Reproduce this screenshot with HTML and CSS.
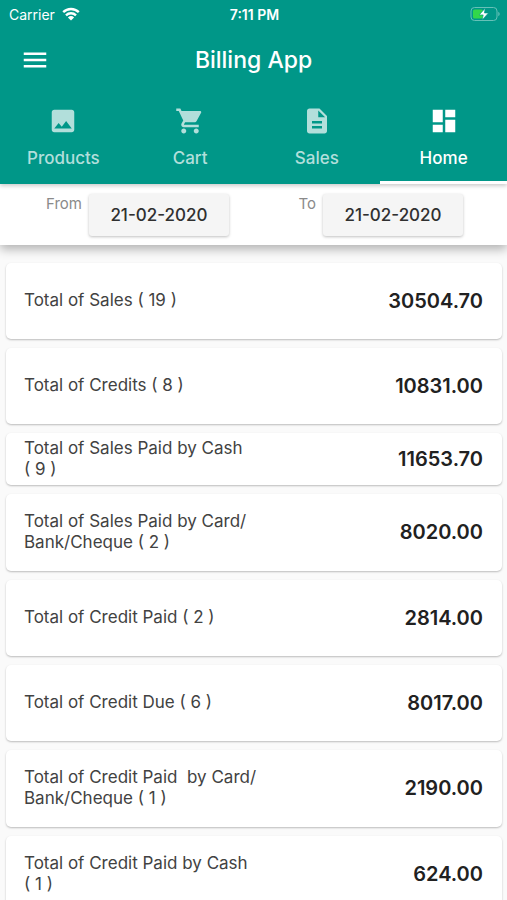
FILE: index.html
```html
<!DOCTYPE html>
<html lang="en">
<head>
<meta charset="utf-8">
<meta name="viewport" content="width=device-width, initial-scale=1">
<title>Billing App</title>
<link rel="stylesheet" href="styles.css">
</head>
<body>
<header class="header">
  <div class="status">
    <div class="carrier">
      <span>Carrier</span>
      <svg class="wifi" viewBox="0 0 18 14" aria-hidden="true">
        <path d="M1.2 5.2a11.2 11.2 0 0 1 15.6 0" />
        <path d="M4 8.3a7.2 7.2 0 0 1 10 0" />
        <path class="solid" d="M9 13.6 5.9 10.4a4.5 4.5 0 0 1 6.2 0z" />
      </svg>
    </div>
    <span class="clock">7:11 PM</span>
    <svg class="battery" viewBox="0 0 30 16" aria-hidden="true">
      <rect class="shell" x="1" y="1.5" width="26" height="13" rx="3.5" />
      <path class="cap" d="M28.3 5.8v4.4q1.4-.7 1.4-2.2t-1.4-2.2z" />
      <rect class="charge" x="3" y="3.5" width="10" height="9" rx="1.5" />
      <path class="bolt" d="M15.2 2.2 9.2 8.900h4l-1 5.100 6.200-7h-4z" />
    </svg>
  </div>
  <div class="appbar">
    <button class="menu" type="button" aria-label="Menu">
      <svg class="icon" viewBox="0 0 24 24" aria-hidden="true"><path d="M3 18h18v-2H3v2zm0-5h18v-2H3v2zm0-7v2h18V6H3z"/></svg>
    </button>
    <h1 class="title">Billing App</h1>
  </div>
  <nav class="tabs">
    <a class="tab" href="#products">
      <svg class="icon" viewBox="0 0 24 24" aria-hidden="true"><path d="M21 19V5c0-1.100-.9-2-2-2H5c-1.100 0-2 .9-2 2v14c0 1.100.9 2 2 2h14c1.100 0 2-.9 2-2zM8.500 13.500l2.500 3.010L14.500 12l4.500 6H5l3.500-4.500z"/></svg>
      <span>Products</span>
    </a>
    <a class="tab" href="#cart">
      <svg class="icon" viewBox="0 0 24 24" aria-hidden="true"><path d="M7 18c-1.100 0-1.990.9-1.990 2S5.900 22 7 22s2-.9 2-2-.9-2-2-2zM1 2v2h2l3.600 7.590-1.350 2.450c-.16.28-.25.61-.25.96 0 1.100.9 2 2 2h12v-2H7.420c-.14 0-.25-.11-.25-.25l.03-.12.900-1.630h7.450c.75 0 1.410-.41 1.750-1.030l3.580-6.490c.08-.14.12-.31.12-.48 0-.55-.45-1-1-1H5.210l-.94-2H1zm16 16c-1.100 0-1.990.9-1.990 2s.89 2 1.990 2 2-.9 2-2-.9-2-2-2z"/></svg>
      <span>Cart</span>
    </a>
    <a class="tab" href="#sales">
      <svg class="icon" viewBox="0 0 24 24" aria-hidden="true"><path d="M14 2H6c-1.100 0-1.990.9-1.990 2L4 20c0 1.100.89 2 1.990 2H18c1.100 0 2-.9 2-2V8l-6-6zm2 16H8v-2h8v2zm0-4H8v-2h8v2zm-3-5V3.500L18.500 9H13z"/></svg>
      <span>Sales</span>
    </a>
    <a class="tab active" href="#home" aria-current="page">
      <svg class="icon" viewBox="0 0 24 24" aria-hidden="true"><path d="M3 13h8V3H3v10zm0 8h8v-6H3v6zm10 0h8V11h-8v10zm0-18v6h8V3h-8z"/></svg>
      <span>Home</span>
    </a>
  </nav>
</header>
<section class="range">
  <div class="field">
    <label for="from">From</label>
    <button class="date" id="from" type="button">21-02-2020</button>
  </div>
  <div class="field">
    <label for="to">To</label>
    <button class="date" id="to" type="button">21-02-2020</button>
  </div>
</section>
<main class="list">
  <article class="card"><span class="label">Total of Sales ( 19 )</span><strong class="amount">30504.70</strong></article>
  <article class="card"><span class="label">Total of Credits ( 8 )</span><strong class="amount">10831.00</strong></article>
  <article class="card dense"><span class="label">Total of Sales Paid by Cash<br>( 9 )</span><strong class="amount">11653.70</strong></article>
  <article class="card"><span class="label">Total of Sales Paid by Card/<br>Bank/Cheque ( 2 )</span><strong class="amount">8020.00</strong></article>
  <article class="card"><span class="label">Total of Credit Paid ( 2 )</span><strong class="amount">2814.00</strong></article>
  <article class="card"><span class="label">Total of Credit Due ( 6 )</span><strong class="amount">8017.00</strong></article>
  <article class="card"><span class="label">Total of Credit Paid&nbsp; by Card/<br>Bank/Cheque ( 1 )</span><strong class="amount">2190.00</strong></article>
  <article class="card"><span class="label">Total of Credit Paid by Cash<br>( 1 )</span><strong class="amount">624.00</strong></article>
</main>
</body>
</html>
```
FILE: styles.css
```css
* {
  box-sizing: border-box;
}

html {
  scrollbar-width: none;
}

body {
  margin: 0;
  background: #fafafa;
  color: #424242;
  font-family: Inter, Roboto, sans-serif;
  font-size: 17px;
}

button {
  border: 0;
  font: inherit;
}

.header {
  position: relative;
  z-index: 2;
  background: #009788;
  color: #fff;
  box-shadow: 0 2px 4px rgba(0, 0, 0, 0.2);
}

.status {
  display: grid;
  grid-template-columns: 1fr auto 1fr;
  align-items: center;
  height: 28px;
  padding: 0 7px 0 9px;
  font-size: 14px;
}

.carrier {
  display: flex;
  align-items: center;
  gap: 7px;
}

.wifi {
  width: 18px;
  height: 14px;
  fill: none;
  stroke: #fff;
  stroke-width: 2.4;
}

.wifi .solid {
  fill: #fff;
  stroke: none;
}

.clock {
  font-weight: 600;
}

.battery {
  justify-self: end;
  width: 30px;
  height: 16px;
}

.battery .shell {
  fill: none;
  stroke: #66c1b8;
}

.battery .cap {
  fill: #66c1b8;
}

.battery .charge {
  fill: #32d74b;
}

.battery .bolt {
  fill: #fff;
  stroke: #009788;
  stroke-width: 0.6;
}

.appbar {
  display: grid;
  grid-template-columns: 1fr auto 1fr;
  align-items: center;
  height: 64px;
  padding: 0 20px;
}

.menu {
  justify-self: start;
  padding: 0;
  background: none;
  color: inherit;
}

.icon {
  display: block;
  width: 30px;
  height: 30px;
  fill: currentColor;
}

.title {
  margin: 0;
  font-size: 23px;
  font-weight: 500;
}

.tabs {
  display: grid;
  grid-template-columns: repeat(4, 1fr);
}

.tab {
  display: flex;
  flex-direction: column;
  align-items: center;
  gap: 12px;
  height: 92px;
  padding-top: 14px;
  border-bottom: 3px solid transparent;
  color: #b2dfdb;
  font-weight: 500;
  line-height: 20px;
  text-decoration: none;
}

.tab.active {
  border-color: #fff;
  color: #fff;
}

.range {
  position: relative;
  z-index: 1;
  display: flex;
  justify-content: space-between;
  padding: 10px 44px 9px 46px;
  background: #fff;
  box-shadow: 0 4px 10px rgba(0, 0, 0, 0.3);
}

.field {
  display: flex;
  gap: 7px;
  color: #8a8a8a;
  font-size: 15px;
  line-height: 19px;
}

.date {
  width: 140px;
  height: 42px;
  padding: 0;
  border-radius: 3px;
  background: #f5f5f5;
  color: #303030;
  font-size: 17px;
  font-weight: 500;
  box-shadow: 0 1px 3px rgba(0, 0, 0, 0.25);
}

.list {
  display: flex;
  flex-direction: column;
  gap: 9px;
  padding: 18px 5px 9px 6px;
}

.card {
  display: flex;
  align-items: center;
  justify-content: space-between;
  min-height: 76px;
  padding: 17px 19px 18px 18px;
  border-radius: 5px;
  background: #fff;
  box-shadow: 0 1px 2px rgba(0, 0, 0, 0.25);
}

.card.dense {
  min-height: 52px;
  padding-top: 5px;
  padding-bottom: 5px;
}

.label {
  line-height: 21px;
}

.amount {
  color: #212121;
  font-size: 20px;
  font-weight: 600;
}
```
